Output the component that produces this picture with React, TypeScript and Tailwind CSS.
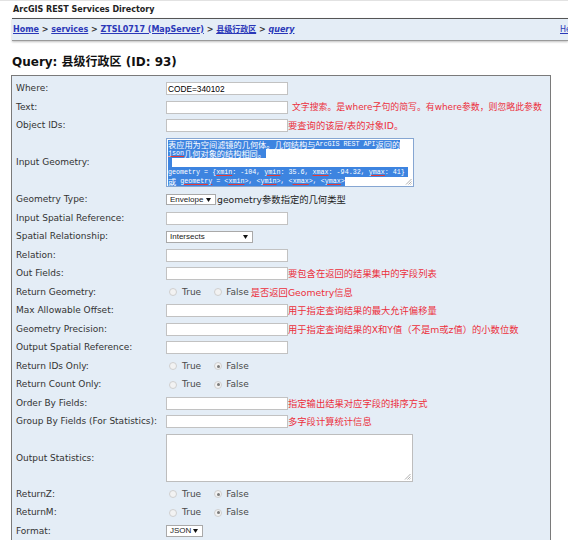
import React from "react";

const Input = ({ value = "" }: { value?: string }) => (
  <input
    readOnly
    value={value}
    className="w-[122px] h-[13px] shrink-0 border border-[#c2c2c2] bg-white px-[1px] text-[8.3px] text-black font-['Liberation_Sans',sans-serif] outline-none"
  />
);

const Hint = ({ children, className = "" }: { children: React.ReactNode; className?: string }) => (
  <span className={`whitespace-nowrap leading-none text-[#ec2f3c] font-['DejaVu_Sans','Noto_Sans_CJK_SC',sans-serif] ${className}`}>
    {children}
  </span>
);

const Caret = () => (
  <svg width="5" height="4" viewBox="0 0 5 4" className="shrink-0">
    <path d="M0 0 H5 L2.5 4 Z" fill="#111" />
  </svg>
);

const Select = ({ value, w, h = "h-[12px]" }: { value: string; w: string; h?: string }) => (
  <div
    className={`${w} ${h} shrink-0 flex items-center justify-between border border-[#a9a9a9] bg-white pl-[3px] pr-[4px] text-[8px] leading-none text-[#222] font-['Liberation_Sans',sans-serif]`}
  >
    <span>{value}</span>
    <Caret />
  </div>
);

const Radio = ({ checked = false }: { checked?: boolean }) => (
  <span className="w-[8px] h-[8px] shrink-0 rounded-full border border-[#cfcfcf] bg-[#f2f2f2] flex items-center justify-center">
    {checked && <span className="w-[3px] h-[3px] rounded-full bg-[#7a7a7a]" />}
  </span>
);

const Radios = ({ falseChecked = false }: { falseChecked?: boolean }) => (
  <div className="flex items-center pl-[3px] text-[9px] leading-none text-[#4a4a4a] font-['DejaVu_Sans',sans-serif]">
    <Radio />
    <span className="ml-[5px]">True</span>
    <span className="ml-[13px]">
      <Radio checked={falseChecked} />
    </span>
    <span className="ml-[4px]">False</span>
  </div>
);

const Grip = () => (
  <svg width="7" height="7" viewBox="0 0 7 7" className="absolute right-[1px] bottom-[1px]">
    <path d="M6.5 1 L1 6.5 M6.5 3.5 L3.5 6.5 M6.5 5.5 L5.5 6.5" stroke="#9a9a9a" strokeWidth="0.8" />
  </svg>
);

const Row = ({ label, h = "h-[18.5px]", children }: { label: string; h?: string; children?: React.ReactNode }) => (
  <div className={`flex items-center ${h}`}>
    <div className="w-[150px] shrink-0 whitespace-nowrap text-[9px] leading-none text-[#333] font-['DejaVu_Sans',sans-serif]">
      {label}
    </div>
    <div className="flex items-center">{children}</div>
  </div>
);

const sel = "bg-[#3d84e0] text-white";
const cjk = "font-['Noto_Sans_CJK_SC',sans-serif] text-[8.2px] leading-none";
const mono = "font-['Liberation_Mono',monospace] text-[6.7px] leading-none whitespace-pre";
const sq = "underline decoration-[#e23a3a] underline-offset-[1px]";

const Line = ({ children }: { children?: React.ReactNode }) => (
  <div className="h-[9.2px] flex items-center whitespace-nowrap">{children}</div>
);

const GeometryArea = () => (
  <div className="relative w-[248px] h-[49px] shrink-0 border border-[#86a6d2] bg-white pt-[0.5px] pl-[1px] overflow-hidden">
    <Line>
      <span className={`h-[9.2px] flex items-center ${sel}`}>
        <span className={cjk}>表应用为空间滤镜的几何体。几何结构与</span>
        <span className={mono}>ArcGIS REST API</span>
        <span className={cjk}>返回的</span>
      </span>
    </Line>
    <Line>
      <span className={`h-[9.2px] flex items-center ${sel}`}>
        <span className={`${mono} ${sq}`}>json</span>
        <span className={cjk}>几何对象的结构相同。</span>
      </span>
    </Line>
    <Line>
      <span className={`h-[9.2px] w-[4px] ${sel}`} />
    </Line>
    <Line>
      <span className={`h-[9.2px] flex items-center pr-[3px] ${sel}`}>
        <span className={mono}>
          {"geometry = {"}
          <span className={sq}>xmin</span>
          {": -104, "}
          <span className={sq}>ymin</span>
          {": 35.6, "}
          <span className={sq}>xmax</span>
          {": -94.32, "}
          <span className={sq}>ymax</span>
          {": 41}"}
        </span>
      </span>
    </Line>
    <Line>
      <span className={`h-[9.2px] flex items-center ${sel}`}>
        <span className={cjk}>或</span>
        <span className={mono}>
          {" "}
          <span className={sq}>geometry</span>
          {" = <"}
          <span className={sq}>xmin</span>
          {">, <"}
          <span className={sq}>ymin</span>
          {">, <"}
          <span className={sq}>xmax</span>
          {">, <"}
          <span className={sq}>ymax</span>
          {">"}
        </span>
      </span>
    </Line>
    <Grip />
  </div>
);

export default function App() {
  return (
    <div className="w-[568px] h-[540px] overflow-hidden bg-white font-['DejaVu_Sans',sans-serif]">
      <div className="h-[18px] pl-[13px] pt-[1px] flex items-center border-t border-[#e2e2e2] text-[8px] font-bold leading-none text-[#222]">
        ArcGIS REST Services Directory
      </div>
      <div className="ml-[12px] w-[556px] overflow-hidden h-[23px] flex items-center border-t border-[#555] border-b border-b-[#9a9a9a] bg-[#e4edf6] shadow-[0_1px_2px_rgba(0,0,0,0.25)] text-[8px] leading-none">
        <div className="w-[548px] shrink-0 pl-[1px] font-bold text-[#333] whitespace-nowrap">
          <a className="text-[#2b38b8] underline">Home</a> &gt; <a className="text-[#2b38b8] underline">services</a> &gt;{" "}
          <a className="text-[#2b38b8] underline">ZTSL0717 (MapServer)</a> &gt;{" "}
          <a className="text-[#2b38b8] underline font-['DejaVu_Sans','Noto_Sans_CJK_SC',sans-serif]">县级行政区</a> &gt;{" "}
          <a className="text-[#2b38b8] underline italic">query</a>
        </div>
        <a className="shrink-0 whitespace-nowrap text-[#2b38b8] underline">Help</a>
      </div>
      <div className="mt-[13px] pl-[12px] h-[15px] flex items-center text-[12px] font-bold leading-none text-[#111] font-['DejaVu_Sans','Noto_Sans_CJK_SC',sans-serif]">
        Query: 县级行政区 (ID: 93)
      </div>
      <div className="ml-[11px] mt-[6px] w-[540px] border border-[#7a7a7a] bg-[#e4edf6] pt-[3.5px] pl-[4px]">
        <Row label="Where:">
          <Input value="CODE=340102" />
        </Row>
        <Row label="Text:">
          <Input />
          <Hint className="ml-[4px] text-[8.9px]">文字搜索。是where子句的简写。有where参数，则忽略此参数</Hint>
        </Row>
        <Row label="Object IDs:">
          <Input />
          <Hint className="text-[9.3px]">要查询的该层/表的对象ID。</Hint>
        </Row>
        <Row label="Input Geometry:" h="h-[55.5px]">
          <GeometryArea />
        </Row>
        <Row label="Geometry Type:">
          <Select value="Envelope" w="w-[50px]" h="h-[11px]" />
          <span className="ml-[1px] whitespace-nowrap text-[9.3px] leading-none text-[#222] font-['DejaVu_Sans','Noto_Sans_CJK_SC',sans-serif]">
            geometry参数指定的几何类型
          </span>
        </Row>
        <Row label="Input Spatial Reference:">
          <Input />
        </Row>
        <Row label="Spatial Relationship:">
          <Select value="Intersects" w="w-[87px]" />
        </Row>
        <Row label="Relation:">
          <Input />
        </Row>
        <Row label="Out Fields:">
          <Input />
          <Hint className="text-[9.3px]">要包含在返回的结果集中的字段列表</Hint>
        </Row>
        <Row label="Return Geometry:">
          <Radios />
          <Hint className="ml-[2px] text-[9.3px]">是否返回Geometry信息</Hint>
        </Row>
        <Row label="Max Allowable Offset:">
          <Input />
          <Hint className="text-[9.3px]">用于指定查询结果的最大允许偏移量</Hint>
        </Row>
        <Row label="Geometry Precision:">
          <Input />
          <Hint className="text-[9.3px]">用于指定查询结果的X和Y值（不是m或z值）的小数位数</Hint>
        </Row>
        <Row label="Output Spatial Reference:">
          <Input />
        </Row>
        <Row label="Return IDs Only:">
          <Radios falseChecked />
        </Row>
        <Row label="Return Count Only:">
          <Radios falseChecked />
        </Row>
        <Row label="Order By Fields:">
          <Input />
          <Hint className="text-[9.3px]">指定输出结果对应字段的排序方式</Hint>
        </Row>
        <Row label="Group By Fields (For Statistics):">
          <Input />
          <Hint className="text-[9.3px]">多字段计算统计信息</Hint>
        </Row>
        <Row label="Output Statistics:" h="h-[54px]">
          <div className="relative w-[247px] h-[48px] border border-[#bdbdbd] bg-white">
            <Grip />
          </div>
        </Row>
        <Row label="ReturnZ:">
          <Radios falseChecked />
        </Row>
        <Row label="ReturnM:">
          <Radios falseChecked />
        </Row>
        <Row label="Format:">
          <Select value="JSON" w="w-[37px]" />
        </Row>
        <Row label="">
          <div />
        </Row>
      </div>
    </div>
  );
}
